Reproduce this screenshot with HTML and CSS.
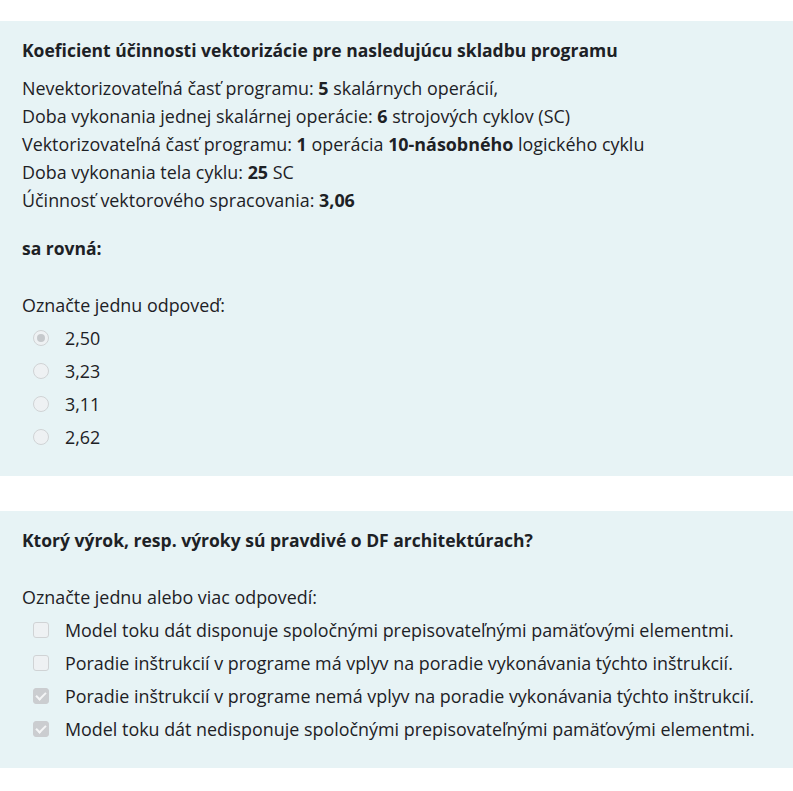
FILE: index.html
```html
<!DOCTYPE html>
<html lang="sk">
<head>
  <meta charset="UTF-8" />
  <meta name="viewport" content="width=device-width, initial-scale=1.0" />
  <title>Test</title>
  <link rel="stylesheet" href="styles.css">
</head>
<body>
  <div class="que">
    <div class="qtext">
      <p class="qtitle">Koeficient účinnosti vektorizácie pre nasledujúcu skladbu programu</p>
      <div class="qlines">
        <p>Nevektorizovateľná časť programu: <b>5</b> skalárnych operácií,</p>
        <p>Doba vykonania jednej skalárnej operácie: <b>6</b> strojových cyklov (SC)</p>
        <p>Vektorizovateľná časť programu: <b>1</b> operácia <b>10-násobného</b> logického cyklu</p>
        <p>Doba vykonania tela cyklu: <b>25</b> SC</p>
        <p>Účinnosť vektorového spracovania: <b>3,06</b></p>
      </div>
      <p class="qtitle qsub">sa rovná:</p>
    </div>
    <div class="prompt">Označte jednu odpoveď:</div>
    <div class="answer">
      <label class="opt"><input type="radio" name="q1" checked disabled><span>2,50</span></label>
      <label class="opt"><input type="radio" name="q1" disabled><span>3,23</span></label>
      <label class="opt"><input type="radio" name="q1" disabled><span>3,11</span></label>
      <label class="opt"><input type="radio" name="q1" disabled><span>2,62</span></label>
    </div>
  </div>

  <div class="que">
    <div class="qtext">
      <p class="qtitle">Ktorý výrok, resp. výroky sú pravdivé o DF architektúrach?</p>
    </div>
    <div class="prompt">Označte jednu alebo viac odpovedí:</div>
    <div class="answer">
      <label class="opt"><input type="checkbox" disabled><span>Model toku dát disponuje spoločnými prepisovateľnými pamäťovými elementmi.</span></label>
      <label class="opt"><input type="checkbox" disabled><span>Poradie inštrukcií v programe má vplyv na poradie vykonávania týchto inštrukcií.</span></label>
      <label class="opt"><input type="checkbox" checked disabled><span>Poradie inštrukcií v programe nemá vplyv na poradie vykonávania týchto inštrukcií.</span></label>
      <label class="opt"><input type="checkbox" checked disabled><span>Model toku dát nedisponuje spoločnými prepisovateľnými pamäťovými elementmi.</span></label>
    </div>
  </div>
</body>
</html>
```

FILE: styles.css
```css
* {
  box-sizing: border-box;
  margin: 0;
  padding: 0;
}

body {
  font-family: 'Open Sans', sans-serif;
  font-size: 17.9px;
  line-height: 28px;
  color: #1d2125;
  background: #fff;
  padding-top: 21px;
}

.que {
  background: #e7f3f5;
  padding: 15px 22px 23px;
  margin-bottom: 35px;
}

.qtitle {
  font-weight: 700;
  font-size: 17.5px;
}

.qlines {
  margin-top: 10px;
}

.qsub {
  margin-top: 20px;
}

.prompt {
  margin-top: 29px;
  margin-bottom: 2px;
}

.opt {
  display: flex;
  align-items: center;
  height: 33px;
  padding-left: 11px;
}

.opt span {
  margin-left: 16px;
}

/* disabled inputs drawn by hand, so they look the same everywhere */
.opt input {
  appearance: none;
  width: 16px;
  height: 16px;
  flex-shrink: 0;
  border: 1px solid #d0d3d5;
  background: #eef1f3;
  position: relative;
}

.opt input[type="radio"] {
  border-radius: 50%;
}

.opt input[type="radio"]:checked::after {
  content: "";
  position: absolute;
  inset: 3px;
  border-radius: 50%;
  background: #c6c9cc;
}

.opt input[type="checkbox"] {
  border-radius: 3px;
}

.opt input[type="checkbox"]:checked {
  background: #cbcdd0;
  border-color: #cbcdd0;
}

.opt input[type="checkbox"]:checked::after {
  content: "";
  position: absolute;
  left: 4px;
  top: 1px;
  width: 4px;
  height: 8px;
  border: solid #f4f5f6;
  border-width: 0 2px 2px 0;
  transform: rotate(45deg);
}
```
